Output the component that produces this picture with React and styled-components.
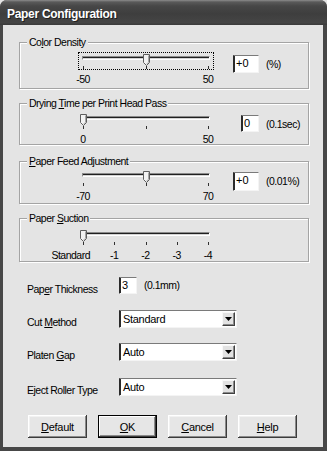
import React from "react";
import styled, { createGlobalStyle } from "styled-components";

const Global = createGlobalStyle`
  html, body { margin: 0; padding: 0; background: #e4e4e4; }
  body {
    font-family: "Liberation Sans", Arial, sans-serif;
    font-size: 10.5px;
    letter-spacing: -0.5px;
    color: #000;
  }
`;

const FACE = "#e4e4e4";

const Window = styled.div`
  width: 327px;
  height: 451px;
  box-sizing: border-box;
  display: flex;
  flex-direction: column;
  background: #474747;
  border-radius: 7px 7px 0 0;
  overflow: hidden;
`;

const TitleBar = styled.div`
  height: 25px;
  flex: none;
  display: flex;
  align-items: center;
  padding-left: 7px;
  background: linear-gradient(#8c8c8c 0, #5a5a5a 2px, #474747 6px, #3e3e3e 55%, #454545 90%, #3a3a3a 100%);
`;

const Title = styled.span`
  color: #fff;
  font: bold 12px "Liberation Sans", Arial, sans-serif;
  letter-spacing: -0.3px;
  text-shadow: 1px 1px 0 #1e1e1e;
  padding-top: 2px;
`;

const Body = styled.div`
  flex: 1;
  margin: 0 4px 4px 3px;
  background: ${FACE};
  display: flex;
  flex-direction: column;
  padding: 17px 14px 0 16px;
`;

const Group = styled.section`
  position: relative;
  box-sizing: border-box;
  height: ${(p) => p.$h}px;
  margin-top: ${(p) => p.$mt}px;
  border: 1px solid #a4a4a4;
  box-shadow: inset 1px 1px 0 #fff, 1px 1px 0 #fff;
  padding: ${(p) => p.$pt}px 0 0 58px;
  display: flex;
  align-items: flex-start;
`;

const Legend = styled.span`
  position: absolute;
  top: -7px;
  left: 7px;
  padding: 0 2px;
  line-height: 13px;
  background: ${FACE};
`;

const U = styled.span`
  text-decoration: underline;
  text-underline-offset: 1px;
`;

const SliderCol = styled.div`
  width: 136px;
  display: flex;
  flex-direction: column;
`;

const SliderBox = styled.div`
  position: relative;
  box-sizing: border-box;
  width: 136px;
  height: 18px;
  border: 1px dotted ${(p) => (p.$focused ? "#000" : "transparent")};
`;

const Track = styled.div`
  box-sizing: border-box;
  margin: 3px 0 0 3px;
  width: 128px;
  height: 4px;
  border-top: 1px solid #8a8a8a;
  border-left: 1px solid #8a8a8a;
  border-bottom: 1px solid #fff;
  border-right: 1px solid #fff;
  background: #d4d4d4;
  box-shadow: inset 0 1px 0 #202020;
`;

const Tick = styled.div`
  position: absolute;
  top: 13px;
  width: 1px;
  height: 3px;
  background: #303030;
`;

const ThumbWrap = styled.div`
  position: absolute;
  top: 1px;
  width: 7px;
  height: 12px;
  line-height: 0;
`;

const TickLabels = styled.div`
  position: relative;
  width: 136px;
  height: 12px;
  margin-top: 3px;
  line-height: 12px;
`;

const TickLabel = styled.span`
  position: absolute;
  top: 0;
  white-space: nowrap;
  transform: ${(p) => (p.$end ? "translateX(calc(-100% + 7px))" : "translateX(-50%)")};
`;

const ValueCell = styled.div`
  width: 45px;
  display: flex;
  justify-content: flex-end;
  margin-top: 3px;
`;

const TextBox = styled.div`
  box-sizing: border-box;
  width: ${(p) => p.$w}px;
  height: ${(p) => p.$hgt || 18}px;
  background: #fff;
  border-top: 1px solid #7a7a7a;
  border-left: 1px solid #2a2a2a;
  border-right: 1px solid #f4f4f4;
  border-bottom: 1px solid #f4f4f4;
  box-shadow: inset 1px 0 0 #2a2a2a;
  padding-left: 2px;
  line-height: 15px;
  font-size: 11px;
  letter-spacing: 0;
  white-space: nowrap;
`;

const Unit = styled.span`
  margin: 3px 0 0 7px;
  line-height: 18px;
  white-space: nowrap;
`;

const FormRow = styled.div`
  display: flex;
  align-items: flex-start;
  height: 18px;
  margin-top: ${(p) => p.$mt}px;
`;

const FieldLabel = styled.span`
  width: 92px;
  padding-left: 8px;
  margin-top: 3px;
  line-height: 18px;
  white-space: nowrap;
`;

const RowUnit = styled.span`
  margin-left: 7px;
  line-height: 17px;
`;

const Select = styled.div`
  box-sizing: border-box;
  width: 118px;
  height: 18px;
  background: #fff;
  border-top: 1px solid #7a7a7a;
  border-left: 1px solid #2a2a2a;
  border-right: 1px solid #f4f4f4;
  border-bottom: 1px solid #f4f4f4;
  box-shadow: inset 1px 0 0 #2a2a2a;
  display: flex;
  align-items: center;
  padding: 0 1px 0 3px;
`;

const SelectText = styled.span`
  flex: 1;
  line-height: 16px;
  font-size: 11px;
  letter-spacing: -0.3px;
`;

const ArrowBtn = styled.div`
  box-sizing: border-box;
  width: 13px;
  height: 14px;
  background: #e2e2e2;
  border-top: 1px solid #f8f8f8;
  border-left: 1px solid #f8f8f8;
  border-right: 1px solid #404040;
  border-bottom: 1px solid #404040;
  box-shadow: inset -1px -1px 0 #8a8a8a;
  display: flex;
  align-items: center;
  justify-content: center;
`;

const Buttons = styled.div`
  display: flex;
  gap: 11px;
  margin-top: 19px;
  padding-left: 9px;
`;

const Button = styled.div`
  box-sizing: border-box;
  width: 59px;
  height: 23px;
  display: flex;
  align-items: center;
  justify-content: center;
  background: #e6e6e6;
  border: ${(p) => (p.$default ? "1px solid #000" : "none")};
  box-shadow: ${(p) =>
    p.$default
      ? "inset -1px -1px 0 #3c3c3c, inset 1px 1px 0 #fff, inset -2px -2px 0 #8a8a8a"
      : "inset -1px -1px 0 #3c3c3c, inset 1px 1px 0 #fff, inset -2px -2px 0 #8a8a8a, inset 2px 2px 0 #f2f2f2"};
  font-size: 11px;
  letter-spacing: -0.3px;
`;

function Thumb({ x }) {
  return (
    <ThumbWrap style={{ left: x - 3 }}>
      <svg width="7" height="12" viewBox="0 0 7 12">
        <path d="M0.5 0.5 H6.5 V8.5 L3.5 11.5 L0.5 8.5 Z" fill="#f2f2f2" stroke="#5e5e5e" />
        <path d="M5.5 1.5 V8.2 L3.5 10.2" stroke="#a6a6a6" fill="none" />
      </svg>
    </ThumbWrap>
  );
}

function Slider({ labels, value, focused }) {
  const n = labels.length;
  const pos = (i) => 4 + (i * 125) / (n - 1);
  return (
    <SliderCol>
      <SliderBox $focused={focused}>
        <Track />
        {labels.map((l, i) => (
          <Tick key={i} style={{ left: pos(i) }} />
        ))}
        <Thumb x={pos(value)} />
      </SliderBox>
      <TickLabels>
        {labels.map((l, i) =>
          l ? (
            <TickLabel key={i} $end={l === "Standard"} style={{ left: pos(i) + 1 }}>
              {l}
            </TickLabel>
          ) : null
        )}
      </TickLabels>
    </SliderCol>
  );
}

function Arrow() {
  return (
    <ArrowBtn>
      <svg width="7" height="4" viewBox="0 0 7 4">
        <path d="M0 0 H7 L3.5 4 Z" fill="#000" />
      </svg>
    </ArrowBtn>
  );
}

export default function App() {
  return (
    <>
      <Global />
      <Window>
        <TitleBar>
          <Title>Paper Configuration</Title>
        </TitleBar>
        <Body>
          <Group $h={47} $mt={0} $pt={9}>
            <Legend>
              Co<U>l</U>or Density
            </Legend>
            <Slider labels={["-50", "", "50"]} value={1} focused />
            <ValueCell>
              <TextBox $w={26}>+0</TextBox>
            </ValueCell>
            <Unit>(%)</Unit>
          </Group>

          <Group $h={42} $mt={14} $pt={8}>
            <Legend>
              Drying <U>T</U>ime per Print Head Pass
            </Legend>
            <Slider labels={["0", "", "50"]} value={0} />
            <ValueCell>
              <TextBox $w={18} $hgt={17}>0</TextBox>
            </ValueCell>
            <Unit>(0.1sec)</Unit>
          </Group>

          <Group $h={43} $mt={16} $pt={7}>
            <Legend>
              <U>P</U>aper Feed Adjustment
            </Legend>
            <Slider labels={["-70", "", "70"]} value={1} />
            <ValueCell>
              <TextBox $w={26} $hgt={19}>+0</TextBox>
            </ValueCell>
            <Unit>(0.01%)</Unit>
          </Group>

          <Group $h={44} $mt={14} $pt={9}>
            <Legend>
              Paper <U>S</U>uction
            </Legend>
            <Slider labels={["Standard", "-1", "-2", "-3", "-4"]} value={0} />
          </Group>

          <FormRow $mt={15}>
            <FieldLabel>
              Pap<U>e</U>r Thickness
            </FieldLabel>
            <TextBox $w={18} $hgt={17}>3</TextBox>
            <RowUnit>(0.1mm)</RowUnit>
          </FormRow>

          <FormRow $mt={15}>
            <FieldLabel>
              Cut <U>M</U>ethod
            </FieldLabel>
            <Select>
              <SelectText>Standard</SelectText>
              <Arrow />
            </Select>
          </FormRow>

          <FormRow $mt={15}>
            <FieldLabel>
              Platen <U>G</U>ap
            </FieldLabel>
            <Select>
              <SelectText>Auto</SelectText>
              <Arrow />
            </Select>
          </FormRow>

          <FormRow $mt={17}>
            <FieldLabel>Eject Roller Type</FieldLabel>
            <Select>
              <SelectText>Auto</SelectText>
              <Arrow />
            </Select>
          </FormRow>

          <Buttons>
            <Button>
              <span>
                <U>D</U>efault
              </span>
            </Button>
            <Button $default>
              <span>
                <U>O</U>K
              </span>
            </Button>
            <Button>
              <span>
                <U>C</U>ancel
              </span>
            </Button>
            <Button>
              <span>
                <U>H</U>elp
              </span>
            </Button>
          </Buttons>
        </Body>
      </Window>
    </>
  );
}
